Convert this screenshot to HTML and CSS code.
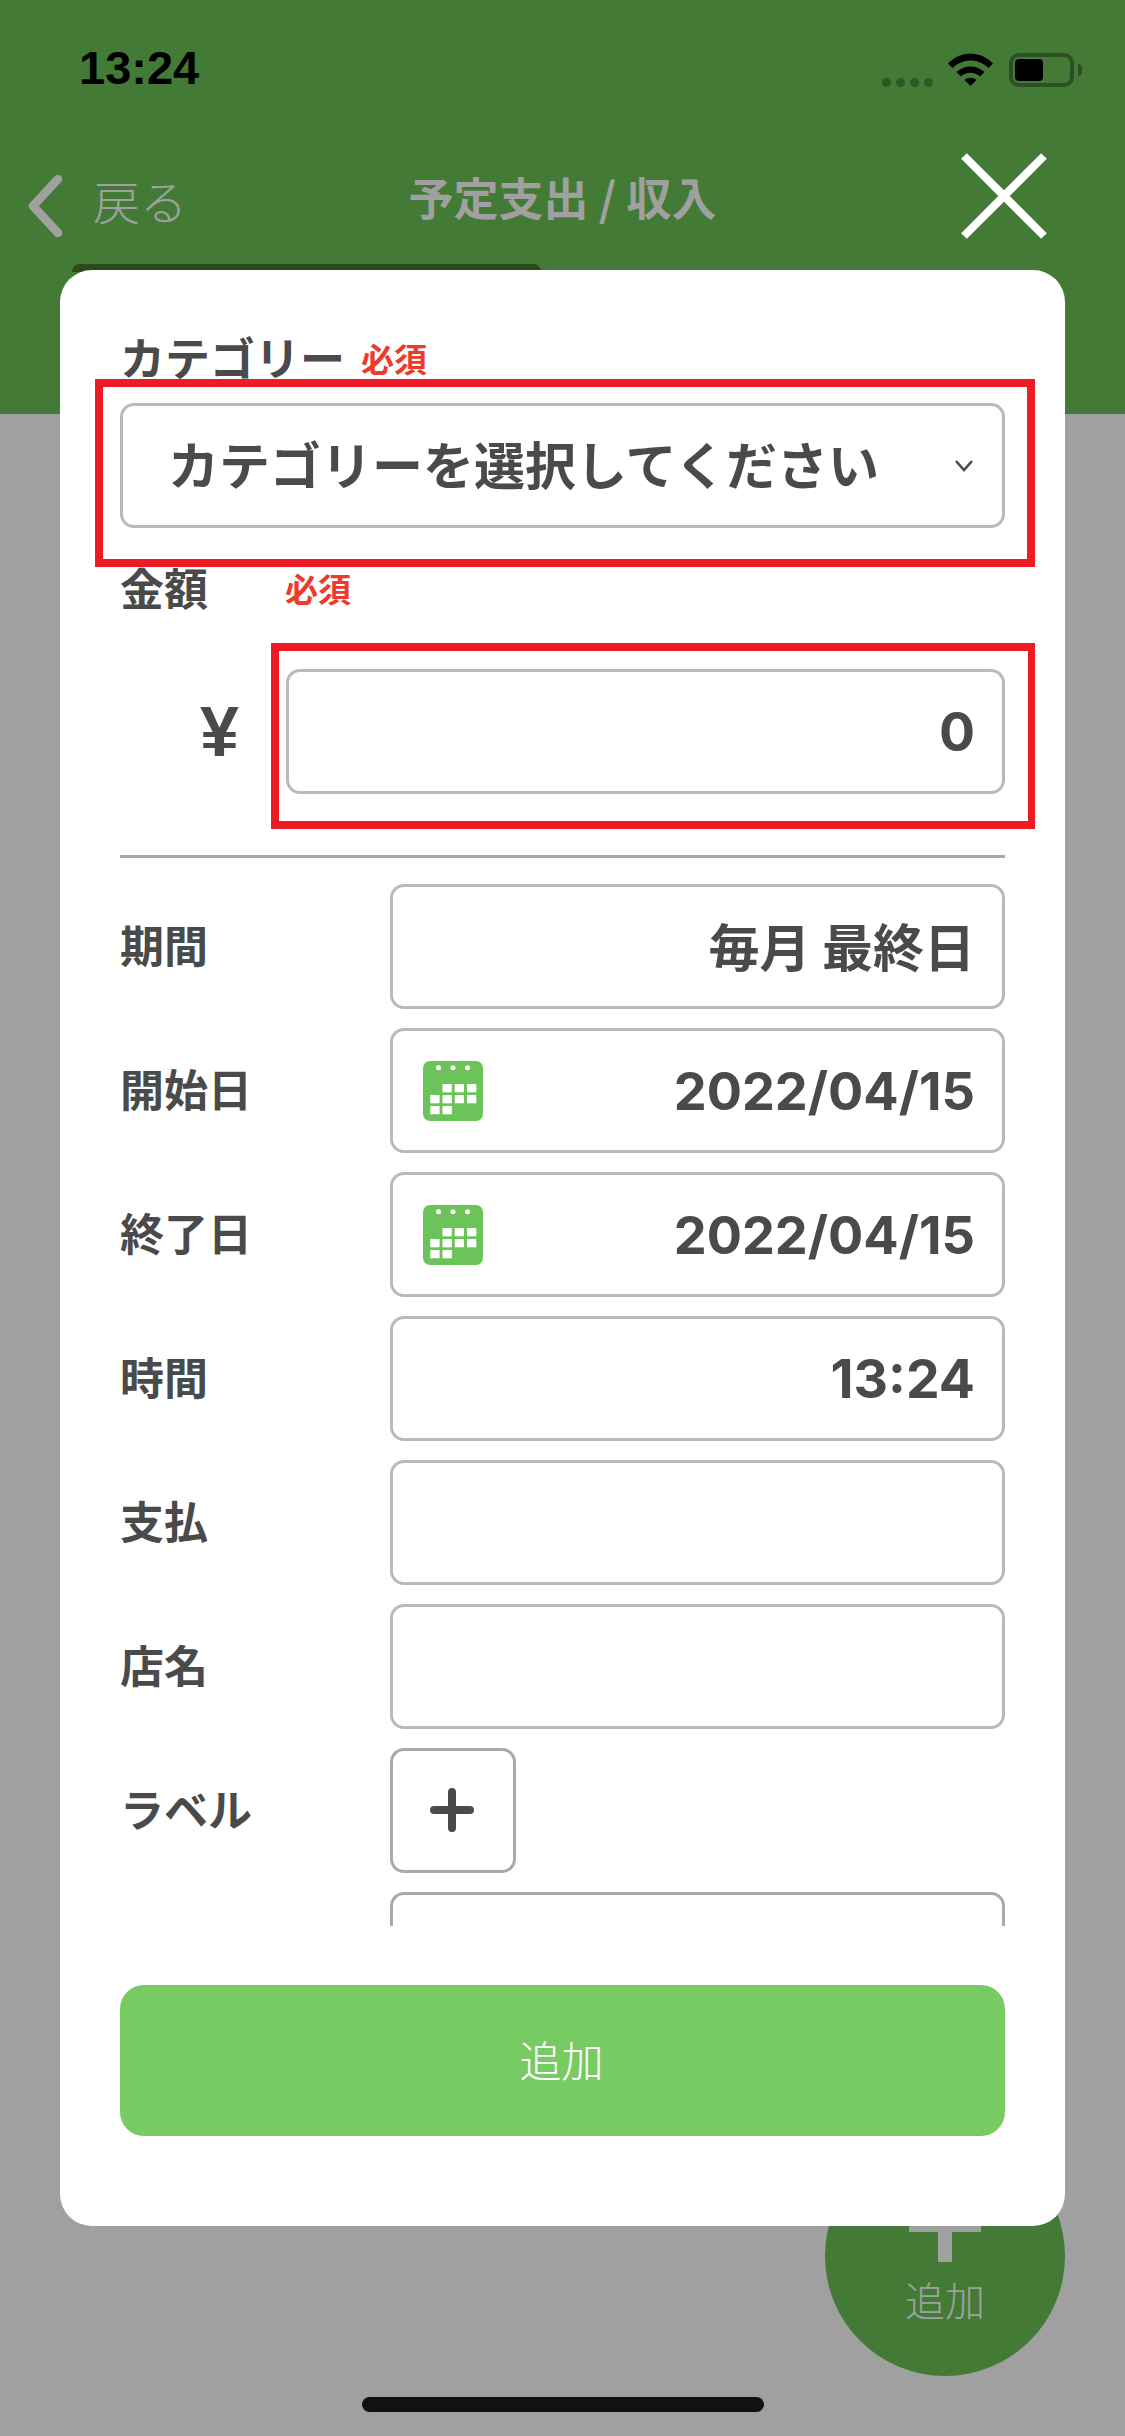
FILE: index.html
```html
<!DOCTYPE html>
<html lang="ja">
<head>
<meta charset="utf-8">
<title>予定支出 / 収入</title>
<link rel="stylesheet" href="styles.css">
</head>
<body>
<div class="app">
  <header class="header">
    <div class="status">
      <span class="time">13:24</span>
      <div class="status-icons">
        <div class="signal"><i></i><i></i><i></i><i></i></div>
        <svg class="wifi" width="45" height="33" viewBox="0 0 45 33"><path d="M0 10.5C13-3 32-3 45 10.5L40.5 15C30 5 15 5 4.500 15Z"/><path d="M8.500 19C16 11.500 29 11.500 36.500 19L32 23.500C26.500 18.500 18.500 18.500 13 23.500Z"/><path d="M16.500 27C20 24 25 24 28.500 27L22.500 33Z"/></svg>
        <div class="battery"><div class="battery-level"></div></div>
        <div class="battery-nub"></div>
      </div>
    </div>
    <nav class="nav">
      <div class="back">
        <svg width="36" height="62" viewBox="0 0 36 62"><path d="M31 4 6 31 31 58" fill="none" stroke="#a0a0a0" stroke-width="8.500" stroke-linecap="round" stroke-linejoin="round"/></svg>
        <span>戻る</span>
      </div>
      <h1 class="title">予定支出 / 収入</h1>
      <svg class="close" width="86" height="86" viewBox="0 0 86 86"><path d="M3 3 83 83M83 3 3 83" fill="none" stroke="#fff" stroke-width="8"/></svg>
    </nav>
    <div class="tab"></div>
  </header>

  <button class="fab" type="button">
    <span class="fab-plus"></span>
    <span class="fab-label">追加</span>
  </button>

  <section class="modal">
    <div class="scroll">
      <div class="label-row">
        <span class="label label-top">カテゴリー</span>
        <span class="required">必須</span>
      </div>
      <div class="field-wrap">
        <div class="field select">
          <span>カテゴリーを選択してください</span>
          <svg width="20" height="13" viewBox="0 0 20 13"><path d="M2 2 10 11 18 2" fill="none" stroke="#4a4a4a" stroke-width="2.500"/></svg>
        </div>
        <div class="annotation annotation-category"></div>
      </div>

      <div class="label-row amount-label">
        <span class="label">金額</span>
        <span class="required">必須</span>
      </div>
      <div class="amount-row">
        <span class="yen">¥</span>
        <div class="field-wrap amount-wrap">
          <div class="field value num">0</div>
          <div class="annotation annotation-amount"></div>
        </div>
      </div>

      <hr class="divider">

      <div class="rows">
        <div class="row"><span class="label">期間</span><div class="field value cjk">毎月 最終日</div></div>
        <div class="row"><span class="label">開始日</span>
          <div class="field value date">
            <svg class="cal" width="60" height="60" viewBox="0 0 60 60"><rect width="60" height="60" rx="7" fill="#6cc35a"/><g fill="#fff"><circle cx="15.500" cy="6.700" r="2.500"/><circle cx="30" cy="6.700" r="2.500"/><circle cx="44.500" cy="6.700" r="2.500"/><rect x="19.500" y="23" width="9.300" height="8.300"/><rect x="31.700" y="23" width="9.300" height="8.300"/><rect x="44" y="23" width="9.300" height="8.300"/><rect x="7.300" y="34" width="9.300" height="8.300"/><rect x="19.500" y="34" width="9.300" height="8.300"/><rect x="31.700" y="34" width="9.300" height="8.300"/><rect x="44" y="34" width="9.300" height="8.300"/><rect x="7.300" y="45" width="9.300" height="8.300"/><rect x="19.500" y="45" width="9.300" height="8.300"/></g></svg>
            <span class="num num-date">2022/04/15</span>
          </div>
        </div>
        <div class="row"><span class="label">終了日</span>
          <div class="field value date">
            <svg class="cal" width="60" height="60" viewBox="0 0 60 60"><rect width="60" height="60" rx="7" fill="#6cc35a"/><g fill="#fff"><circle cx="15.500" cy="6.700" r="2.500"/><circle cx="30" cy="6.700" r="2.500"/><circle cx="44.500" cy="6.700" r="2.500"/><rect x="19.500" y="23" width="9.300" height="8.300"/><rect x="31.700" y="23" width="9.300" height="8.300"/><rect x="44" y="23" width="9.300" height="8.300"/><rect x="7.300" y="34" width="9.300" height="8.300"/><rect x="19.500" y="34" width="9.300" height="8.300"/><rect x="31.700" y="34" width="9.300" height="8.300"/><rect x="44" y="34" width="9.300" height="8.300"/><rect x="7.300" y="45" width="9.300" height="8.300"/><rect x="19.500" y="45" width="9.300" height="8.300"/></g></svg>
            <span class="num num-date">2022/04/15</span>
          </div>
        </div>
        <div class="row"><span class="label">時間</span><div class="field value num">13:24</div></div>
        <div class="row"><span class="label">支払</span><div class="field"></div></div>
        <div class="row"><span class="label">店名</span><div class="field"></div></div>
        <div class="row"><span class="label">ラベル</span>
          <div class="field plus-box">
            <svg width="44" height="44" viewBox="0 0 44 44"><path d="M22 4V40M4 22H40" fill="none" stroke="#4a4a4a" stroke-width="8" stroke-linecap="round"/></svg>
          </div>
        </div>
        <div class="row"><span class="label"></span><div class="field field-dark"></div></div>
      </div>
    </div>
    <button class="submit" type="button">追加</button>
  </section>

  <div class="home"></div>
</div>
</body>
</html>
```

FILE: styles.css
```css
* { box-sizing: border-box; }
html, body { margin: 0; padding: 0; }
body { font-family: "Liberation Sans", "Noto Sans CJK JP", sans-serif; }

.app {
  position: relative;
  width: 1125px;
  height: 2436px;
  overflow: hidden;
  background: #a0a0a0;
}

.header {
  height: 414px;
  background: #437a35;
  display: flex;
  flex-direction: column;
}

.status {
  height: 52px;
  margin-top: 44px;
  padding: 0 43px 0 79px;
  display: flex;
  justify-content: space-between;
  align-items: center;
}
.time { font-size: 47px; font-weight: 700; color: #000; line-height: 1; margin-bottom: 5px; }
.status-icons { display: flex; align-items: flex-end; height: 34px; }
.signal { display: flex; gap: 5px; margin-right: 15px; }
.signal i { width: 9px; height: 9px; border-radius: 50%; background: #2c5a24; display: block; }
.wifi { display: block; margin-bottom: 1px; margin-right: 16px; }
.battery {
  width: 65px; height: 34px;
  border: 4px solid #2c4f23;
  border-radius: 10px;
  padding: 2px;
}
.battery-level { width: 28px; height: 22px; background: #000; border-radius: 4px; }
.battery-nub { width: 4px; height: 12px; background: #2c4f23; border-radius: 0 6px 6px 0; margin: 0 0 11px 4px; }

.nav {
  height: 86px;
  margin-top: 57px;
  padding: 0 27px;
  display: grid;
  grid-template-columns: 1fr auto 1fr;
  align-items: center;
}
.back {
  display: flex;
  align-items: center;
  gap: 30px;
  color: #a0a0a0;
  font-size: 47px;
  line-height: 1;
  font-family: "Noto Sans CJK JP", sans-serif;
  font-weight: 300;
  margin-top: 19px;
}
.back span { margin-top: -12px; }
.title {
  margin: 0;
  font-family: "Noto Sans CJK JP", sans-serif;
  font-size: 45px;
  font-weight: 700;
  color: #a0a0a0;
  text-align: center;
  line-height: 1;
}
.close { display: block; justify-self: end; margin-right: 51px; }

.tab {
  width: 469px;
  height: 8px;
  margin: 25px 0 0 72px;
  background: #2a4a1e;
  border-radius: 30px 30px 0 0;
}

.fab {
  position: absolute;
  left: 825px;
  top: 2136px;
  width: 240px;
  height: 240px;
  border: 0;
  padding: 0;
  border-radius: 50%;
  background: #437a35;
}
.fab-plus {
  position: absolute;
  left: 84px; top: 64px;
  width: 72px; height: 62px;
  background:
    linear-gradient(#a0a0a0, #a0a0a0) center / 14px 100% no-repeat,
    linear-gradient(#a0a0a0, #a0a0a0) center 24px / 72px 8px no-repeat;
}
.fab-label {
  position: absolute;
  left: 0; right: 0; top: 139px;
  text-align: center;
  font-family: "Noto Sans CJK JP", sans-serif;
  font-weight: 300;
  font-size: 40px;
  line-height: 1.2;
  color: #a0a0a0;
}

.modal {
  position: absolute;
  left: 60px;
  top: 270px;
  width: 1005px;
  height: 1956px;
  padding: 35px 60px 90px;
  background: #fff;
  border-radius: 32px;
  display: flex;
  flex-direction: column;
}

.scroll { height: 1621px; overflow: hidden; flex: none; margin: 0 -30px; padding: 30px 30px 0; }

.label-row { height: 46px; margin-bottom: 22px; display: flex; align-items: center; }
.label, .required, .field {
  font-family: "Noto Sans CJK JP", sans-serif;
}
.label { font-size: 44px; font-weight: 700; color: #4a4a4a; line-height: 46px; padding-bottom: 2px; }
.label-top { font-size: 45px; }
.required { font-size: 33px; font-weight: 700; color: #ee3a2a; margin-left: 16px; line-height: 46px; }
.amount-label { margin-top: 37px; margin-bottom: 58px; }
.amount-label .required { margin-left: 77px; }

.field-wrap { position: relative; }
.field {
  height: 125px;
  border: 3px solid #bbbbb5;
  border-radius: 14px;
  background: #fff;
  color: #4a4a4a;
  font-weight: 700;
  font-size: 50px;
  display: flex;
  align-items: center;
}
.select { font-size: 51px; justify-content: space-between; padding: 0 28px 0 45px; }
.select span { padding-bottom: 5px; }
.value { justify-content: flex-end; padding-right: 27px; }
.cjk { font-size: 51px; padding-bottom: 4px; }
.num { font-family: Inter, "Liberation Sans", sans-serif; font-size: 53.500px; font-weight: 700; }
.num-date { font-size: 52.300px; }
.date { justify-content: space-between; padding-left: 30px; }
.cal { display: block; }

.annotation {
  position: absolute;
  border: 8px solid #ed1c24;
  pointer-events: none;
}
.annotation-category { left: -25px; right: -30px; top: -24px; bottom: -39px; }
.annotation-amount { left: -15px; right: -31px; top: -26px; bottom: -35px; }

.amount-row { display: flex; align-items: center; }
.yen { width: 166px; font-size: 70px; font-weight: 700; color: #4a4a4a; text-align: right; padding-right: 47px; flex: none; }
.amount-wrap { flex: 1; }

.divider { height: 3px; margin: 61px 0 26px; border: 0; background: #a8a8a8; }

.rows { display: flex; flex-direction: column; gap: 19px; }
.row { display: flex; align-items: center; }
.row .label { width: 270px; flex: none; padding-bottom: 5px; }
.row .field { flex: 1; }
.row .plus-box { flex: none; width: 126px; justify-content: center; border-color: #aaa; padding: 0 3px 2px 0; }
.field-dark { border-color: #aaa; }

.submit {
  height: 151px;
  margin-top: 59px;
  width: 885px;
  flex: none;
  border: 0;
  border-radius: 24px;
  background: #78cb62;
  color: #fff;
  font-family: "Noto Sans CJK JP", sans-serif;
  font-weight: 300;
  font-size: 42px;
  padding: 0 2px 4px 0;
}

.home {
  position: absolute;
  left: 362px;
  top: 2397px;
  width: 402px;
  height: 15px;
  border-radius: 8px;
  background: #111;
}
```
